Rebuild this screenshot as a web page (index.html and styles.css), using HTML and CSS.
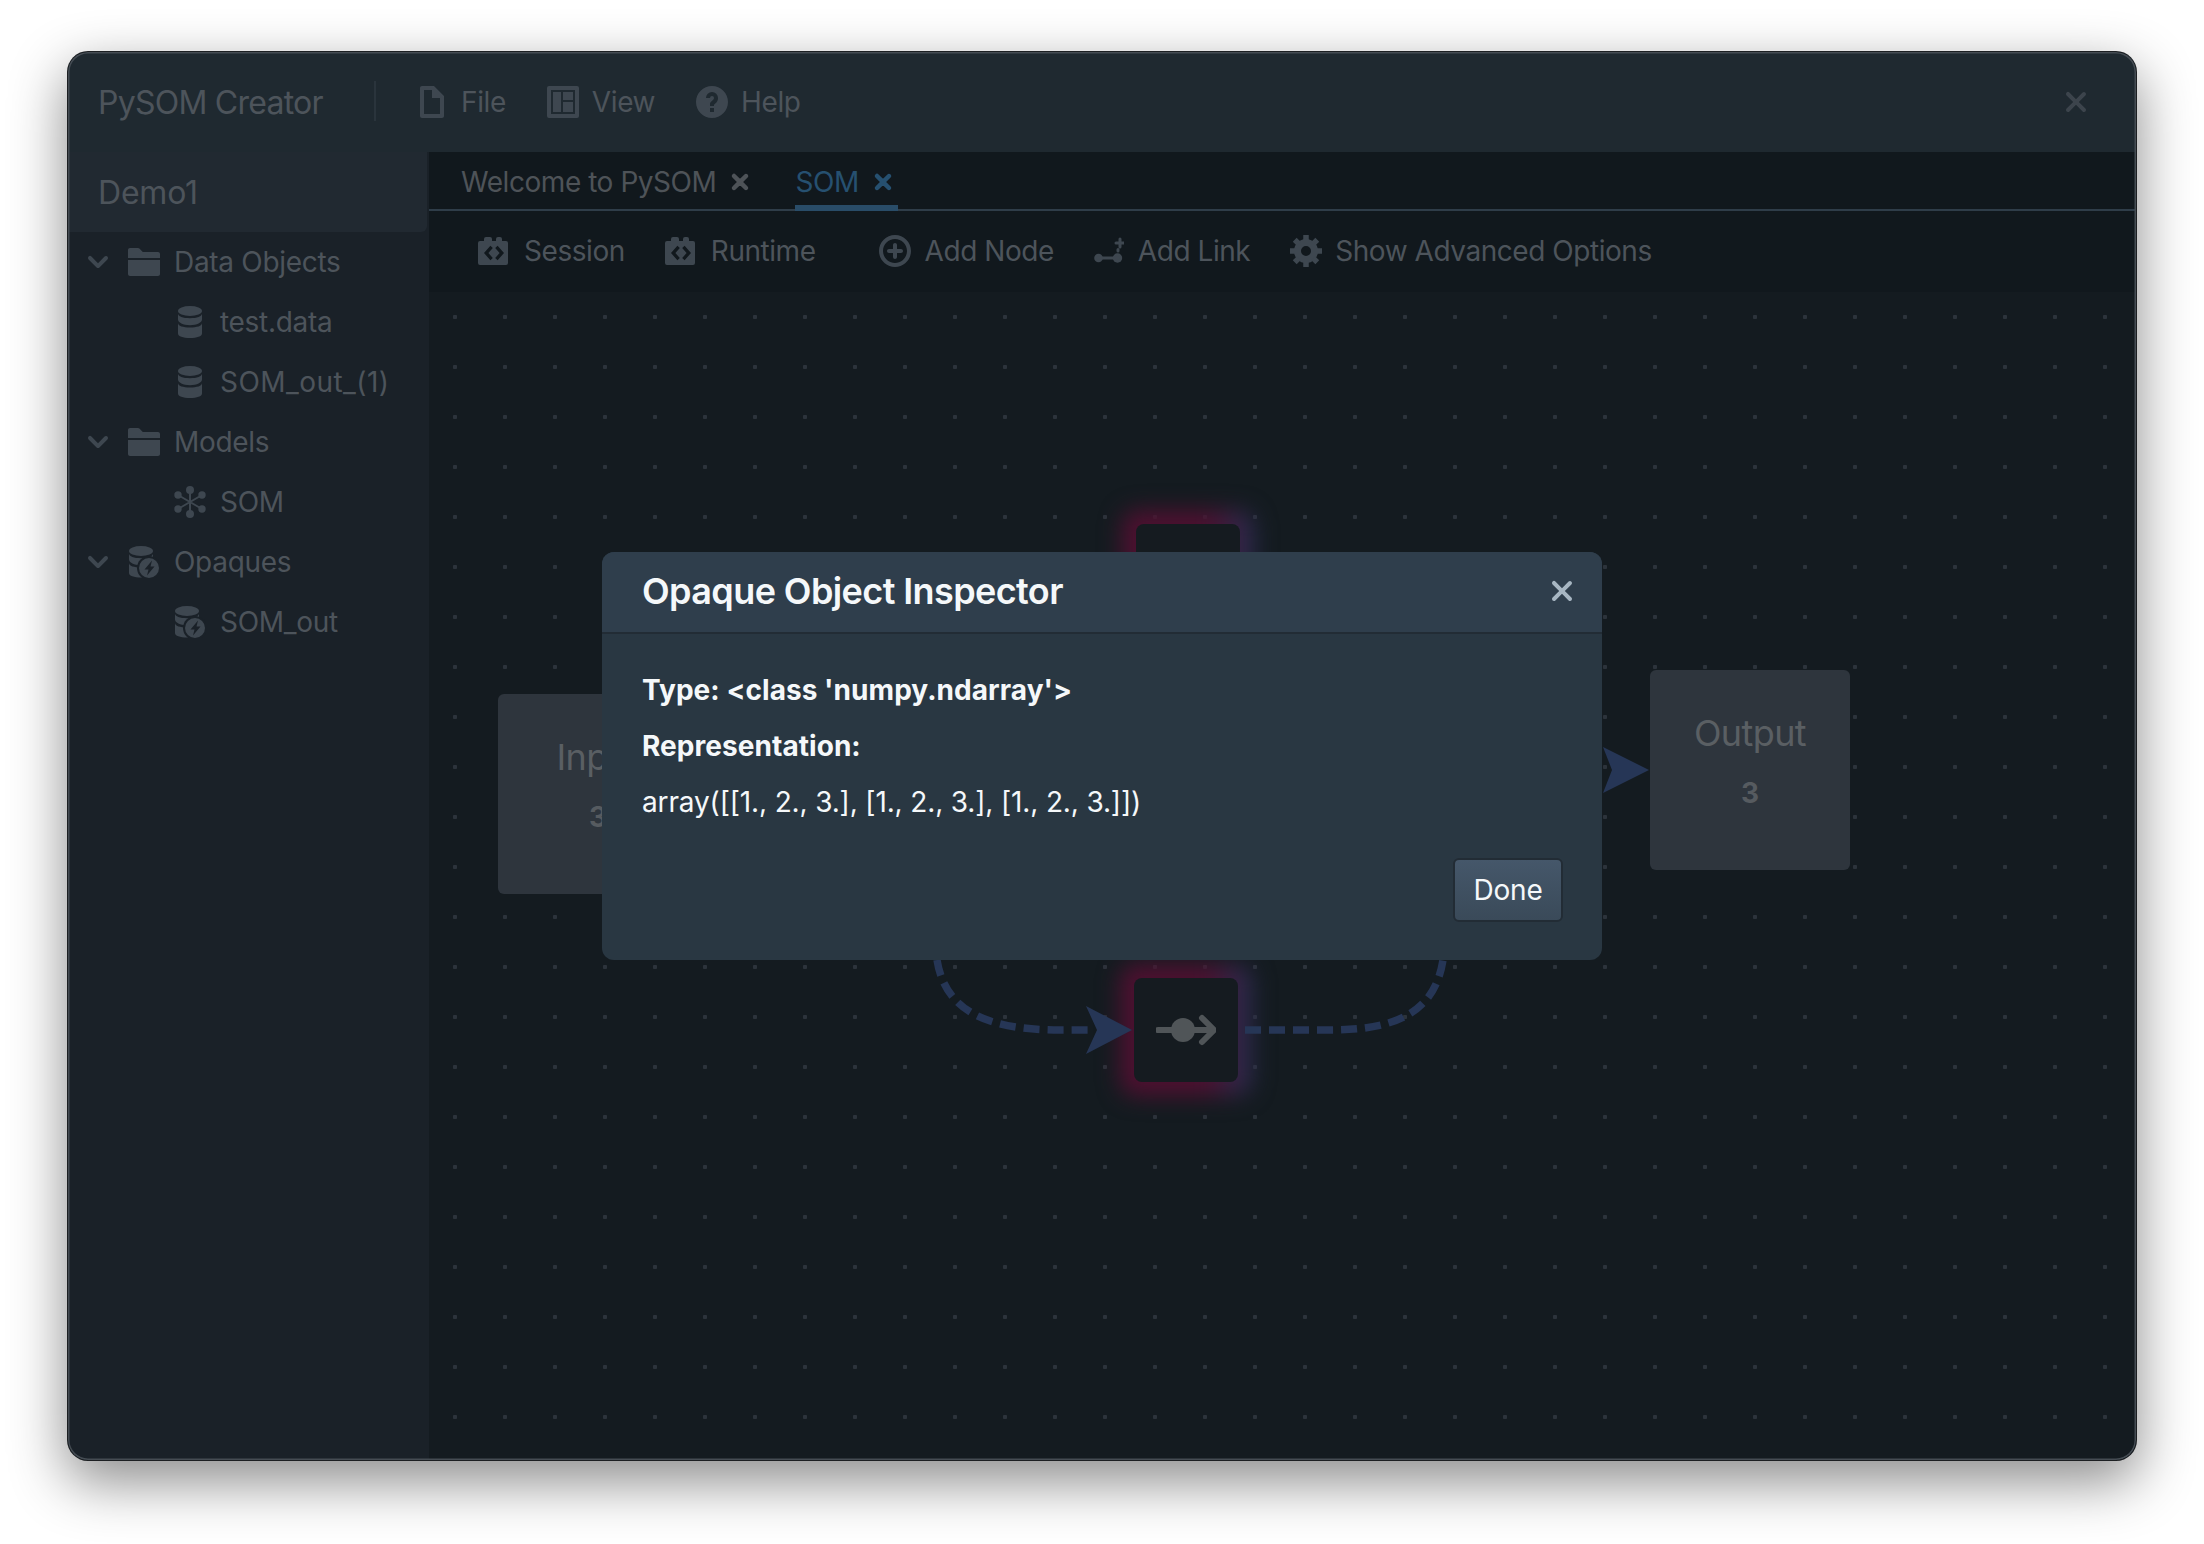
FILE: index.html
```html
<!DOCTYPE html>
<html lang="en">
<head>
    <meta charset="UTF-8">
    <title>PySOM Creator</title>
    <link rel="stylesheet" href="styles.css">
</head>
<body>
    <!-- icon sprite -->
    <svg class="sprite" xmlns="http://www.w3.org/2000/svg">
        <symbol id="i-cross" viewBox="0 0 16 16"><path d="M9.41 8l3.29-3.29c.19-.18.3-.43.3-.71a1.003 1.003 0 00-1.71-.71L8 6.59l-3.29-3.3a1.003 1.003 0 00-1.42 1.42L6.59 8 3.3 11.29c-.19.18-.3.43-.3.71a1.003 1.003 0 001.71.71L8 9.41l3.29 3.29c.18.19.43.3.71.3a1.003 1.003 0 00.71-1.71L9.41 8z"/></symbol>
        <symbol id="i-chevron" viewBox="0 0 16 16"><path d="M12 5c-.28 0-.53.11-.71.29L8 8.59l-3.29-3.3a1.003 1.003 0 00-1.42 1.42l4 4c.18.18.43.29.71.29s.53-.11.71-.29l4-4A1.003 1.003 0 0012 5z"/></symbol>
        <symbol id="i-document" viewBox="0 0 16 16"><path d="M9 0H3c-.55 0-1 .45-1 1v14c0 .55.45 1 1 1h10c.55 0 1-.45 1-1V5L9 0zm3 14H4V2h4v4h4v8z"/></symbol>
        <symbol id="i-control" viewBox="0 0 16 16"><path fill-rule="evenodd" d="M1 0h14a1 1 0 0 1 1 1v14a1 1 0 0 1-1 1H1a1 1 0 0 1-1-1V1a1 1 0 0 1 1-1zM2 2v12h12V2zM3 3h4v10H3zM8 3h5v4H8zM8 8h5v5H8z"/></symbol>
        <symbol id="i-help" viewBox="0 0 16 16"><path fill-rule="evenodd" d="M8 0C3.58 0 0 3.58 0 8s3.58 8 8 8 8-3.58 8-8-3.58-8-8-8zM7 11h2v2H7zM8 3a3 3 0 0 0-3 3h2a1 1 0 1 1 2 0c0 .3-.1.5-.3.7L7.3 8.1c-.2.2-.3.5-.3.9v1h2v-.6l1.2-1.2c.5-.5.8-1.2.8-2.2a3 3 0 0 0-3-3z"/></symbol>
        <symbol id="i-folder" viewBox="0 0 16 16"><path d="M0 14c0 .55.45 1 1 1h14c.55 0 1-.45 1-1V7H0v7zM15 3H7.41L5.7 1.29A.965.965 0 005 1H1c-.55 0-1 .45-1 1v4h16V4c0-.55-.45-1-1-1z"/></symbol>
        <symbol id="i-database" viewBox="0 0 24 32">
            <ellipse cx="12" cy="5" rx="12" ry="5"/>
            <path d="M0 7.500c0 3 5 4.700 12 4.700s12-1.700 12-4.700v6c0 3-5 5.700-12 5.700S0 16.500 0 13.500z"/>
            <path d="M0 17c0 3 5 4.500 12 4.500S24 20 24 17v10.500c0 2.800-5 4.500-12 4.500S0 30.300 0 27.500z"/>
        </symbol>
        <symbol id="i-graph" viewBox="0 0 32 32">
            <path d="M16 4v24M4 9l24 14M28 9L4 23" stroke="currentColor" stroke-width="2"/>
            <circle cx="16" cy="4" r="4"/><circle cx="16" cy="28" r="4"/>
            <circle cx="4" cy="9" r="3.700"/><circle cx="28" cy="9" r="3.700"/>
            <circle cx="4" cy="23" r="3.700"/><circle cx="28" cy="23" r="3.700"/>
        </symbol>
        <symbol id="i-opaque" viewBox="0 0 30 32">
            <ellipse cx="12" cy="5" rx="12" ry="5"/>
            <path d="M0 7.500c0 3 5 4.700 12 4.700s12-1.700 12-4.700v6c0 3-5 5.700-12 5.700S0 16.500 0 13.500z"/>
            <path d="M0 17c0 3 5 4.500 12 4.500S24 20 24 17v10c0 2.800-5 4.500-12 4.500S0 29.800 0 27z"/>
            <circle cx="20" cy="22" r="12" fill="#1a2128"/>
            <circle cx="20" cy="22" r="10"/>
            <path d="M23 14.500l-7.500 9h4L18 29.500l7.500-9h-4z" fill="#1a2128"/>
        </symbol>
        <symbol id="i-code" viewBox="0 0 16 16"><path fill-rule="evenodd" d="M1 3h2V2a1 1 0 0 1 1-1h2a1 1 0 0 1 1 1v1h2V2a1 1 0 0 1 1-1h1a1 1 0 0 1 1 1v1h2a1 1 0 0 1 1 1v10a1 1 0 0 1-1 1H1a1 1 0 0 1-1-1V4a1 1 0 0 1 1-1zM6.200 5.400L3 9l3.200 3.600 1.200-1.100L5.200 9l2.200-2.500zM9.800 5.400L8.600 6.500 10.800 9l-2.200 2.500 1.200 1.100L13 9z"/></symbol>
        <symbol id="i-add" viewBox="0 0 16 16"><path d="M11 7H9V5c0-.55-.45-1-1-1s-1 .45-1 1v2H5c-.55 0-1 .45-1 1s.45 1 1 1h2v2c0 .55.45 1 1 1s1-.45 1-1V9h2c.55 0 1-.45 1-1s-.45-1-1-1zM8 0C3.580 0 0 3.580 0 8s3.580 8 8 8 8-3.580 8-8-3.580-8-8-8zm0 14c-3.310 0-6-2.690-6-6s2.690-6 6-6 6 2.690 6 6-2.690 6-6 6z"/></symbol>
        <symbol id="i-link" viewBox="0 0 30 28">
            <circle cx="4.500" cy="21" r="4.300"/><circle cx="23.500" cy="21" r="4.700"/>
            <path d="M4 21h20M24 12.500v1.500M26 2v8M22 6h8" stroke="currentColor" stroke-width="3" stroke-linecap="round"/>
        </symbol>
        <symbol id="i-gear" viewBox="0 0 32 32">
            <circle cx="16" cy="16" r="8.500" fill="none" stroke="currentColor" stroke-width="7"/>
            <path d="M16 0v6M16 26v6M0 16h6M26 16h6M4.700 4.700l4.200 4.200M23.100 23.100l4.200 4.200M27.300 4.700l-4.200 4.200M8.900 23.100l-4.200 4.200" stroke="currentColor" stroke-width="5.500"/>
        </symbol>
        <symbol id="i-merge" viewBox="0 0 60 32">
            <circle cx="27" cy="16" r="12"/>
            <path d="M2 16h55M46 4l12 12-12 12" fill="none" stroke="currentColor" stroke-width="6" stroke-linecap="round" stroke-linejoin="round"/>
        </symbol>
    </svg>

    <div class="window">
        <header class="titlebar">
            <div class="app-name">PySOM Creator</div>
            <div class="divider"></div>
            <nav class="menu">
                <a class="menu-item"><svg class="icon"><use href="#i-document"/></svg>File</a>
                <a class="menu-item"><svg class="icon"><use href="#i-control"/></svg>View</a>
                <a class="menu-item"><svg class="icon"><use href="#i-help"/></svg>Help</a>
            </nav>
            <svg class="window-close"><use href="#i-cross"/></svg>
        </header>

        <div class="main">
            <aside class="sidebar">
                <div class="project">Demo1</div>
                <ul class="tree">
                    <li class="tree-row"><svg class="chevron"><use href="#i-chevron"/></svg><svg class="folder"><use href="#i-folder"/></svg>Data Objects</li>
                    <li class="tree-row child"><svg class="leaf"><use href="#i-database"/></svg>test.data</li>
                    <li class="tree-row child loose"><svg class="leaf"><use href="#i-database"/></svg>SOM_out_(1)</li>
                    <li class="tree-row"><svg class="chevron"><use href="#i-chevron"/></svg><svg class="folder"><use href="#i-folder"/></svg>Models</li>
                    <li class="tree-row child"><svg class="leaf wide"><use href="#i-graph"/></svg>SOM</li>
                    <li class="tree-row"><svg class="chevron"><use href="#i-chevron"/></svg><svg class="folder"><use href="#i-opaque"/></svg>Opaques</li>
                    <li class="tree-row child"><svg class="leaf wide"><use href="#i-opaque"/></svg>SOM_out</li>
                </ul>
            </aside>

            <section class="content">
                <div class="tabs">
                    <div class="tab">Welcome to PySOM<svg class="tab-close"><use href="#i-cross"/></svg></div>
                    <div class="tab active">SOM<svg class="tab-close"><use href="#i-cross"/></svg></div>
                </div>

                <div class="toolbar">
                    <a class="tool"><svg class="icon"><use href="#i-code"/></svg>Session</a>
                    <a class="tool"><svg class="icon"><use href="#i-code"/></svg>Runtime</a>
                    <a class="tool group-start"><svg class="icon"><use href="#i-add"/></svg>Add Node</a>
                    <a class="tool"><svg class="icon icon-link"><use href="#i-link"/></svg>Add Link</a>
                    <a class="tool tight"><svg class="icon"><use href="#i-gear"/></svg>Show Advanced Options</a>
                </div>

                <div class="canvas">
                    <!-- edges, viewBox is in page coordinates -->
                    <svg class="edges" viewBox="429 292 1707 1168">
                        <path class="edge" d="M937 960C945 1010 985 1030 1060 1030L1090 1030"/>
                        <path class="edge" d="M1245 1030L1330 1030C1400 1030 1435 1010 1443 960"/>
                        <path class="head" d="M1132 1030L1086 1006L1097 1030L1086 1054z"/>
                        <path class="head" d="M1649 770L1603 747L1612 770L1603 793z"/>
                    </svg>

                    <div class="node box input-node">
                        <div class="node-name">Input</div>
                        <div class="node-size">3</div>
                    </div>
                    <div class="node box output-node">
                        <div class="node-name">Output</div>
                        <div class="node-size">3</div>
                    </div>
                    <div class="node op top-op"></div>
                    <div class="node op bottom-op"><svg class="op-icon"><use href="#i-merge"/></svg></div>
                </div>
            </section>
        </div>

        <div class="dialog">
            <div class="dialog-header">
                <h2>Opaque Object Inspector</h2>
                <svg class="dialog-close"><use href="#i-cross"/></svg>
            </div>
            <div class="dialog-body">
                <p class="strong">Type: &lt;class 'numpy.ndarray'&gt;</p>
                <p class="strong">Representation:</p>
                <p>array([[1., 2., 3.], [1., 2., 3.], [1., 2., 3.]])</p>
            </div>
            <div class="dialog-footer">
                <button class="btn">Done</button>
            </div>
        </div>
    </div>
</body>
</html>
```

FILE: styles.css
```css
/* --- Page --- */
body {
    margin: 0;
    height: 1544px;
    overflow: hidden;
    background-color: #ffffff;
    font-family: "Inter", "Liberation Sans", sans-serif;
    font-size: 28px;
    letter-spacing: -0.3px;
    color: #4d545b;
}

.sprite {
    position: absolute;
    width: 0;
    height: 0;
}

svg {
    fill: currentColor;
    flex: none;
}

/* --- Window frame --- */
.window {
    position: relative;
    top: 52px;
    left: 68px;
    display: flex;
    flex-direction: column;
    width: 2068px;
    height: 1408px;
    border-radius: 20px;
    overflow: hidden;
    background-color: #1a2128;
    box-shadow: 0 0 0 1px #1c1f22, 0 20px 55px 2px rgba(0, 0, 0, 0.45);
}

.window::after {
    content: "";
    position: absolute;
    inset: 0;
    border-radius: 20px;
    box-shadow: inset 0 0 0 1.5px #454c53;
    pointer-events: none;
}

/* --- Title bar --- */
.titlebar {
    display: flex;
    align-items: center;
    height: 100px;
    flex: none;
    padding-left: 30px;
    background-color: #1f2930;
}

.app-name {
    font-size: 32px;
    letter-spacing: -0.75px;
    width: 276px;
}

.divider {
    width: 2px;
    height: 40px;
    background-color: #2a343c;
    margin-top: -2px;
}

.menu {
    display: flex;
    gap: 41px;
    margin-left: 40px;
    margin-top: -1px;
    letter-spacing: -0.4px;
}

.menu-item {
    display: flex;
    align-items: center;
    gap: 13px;
}

.icon {
    width: 32px;
    height: 32px;
    color: #3e4750;
}

.icon-link {
    width: 30px;
    height: 28px;
}

.window-close {
    width: 32px;
    height: 32px;
    margin-left: auto;
    margin-right: 44px;
    color: #3c444c;
}

/* --- Sidebar --- */
.main {
    display: flex;
    flex: 1;
    min-height: 0;
}

.sidebar {
    width: 361px;
    flex: none;
    background-color: #1a2128;
}

.project {
    height: 80px;
    line-height: 82px;
    padding-left: 30px;
    font-size: 32px;
    letter-spacing: -0.2px;
    background-color: #212931;
    border-radius: 0 0 6px 0;
    margin-right: 2px;
}

.tree {
    list-style: none;
    margin: 0;
    padding: 0;
}

.tree-row {
    display: flex;
    align-items: center;
    height: 60px;
    padding-left: 14px;
}

.tree-row.child {
    padding-left: 110px;
}

.tree-row.loose {
    letter-spacing: 0.45px;
}

.chevron {
    width: 32px;
    height: 32px;
    color: #3e4750;
    margin-right: 14px;
}

.folder {
    width: 32px;
    height: 32px;
    color: #3e4750;
    margin-right: 14px;
}

.leaf {
    width: 24px;
    height: 32px;
    color: #3e4750;
    margin-right: 18px;
}

.leaf.wide {
    width: 32px;
    margin-left: -4px;
    margin-right: 14px;
}

/* --- Tabs --- */
.content {
    display: flex;
    flex-direction: column;
    flex: 1;
    min-width: 0;
    background-color: #11181d;
}

.tabs {
    display: flex;
    gap: 43px;
    height: 59px;
    flex: none;
    box-sizing: border-box;
    padding-left: 32px;
    border-bottom: 2px solid #2f3d49;
    letter-spacing: -0.45px;
}

.tab {
    display: flex;
    align-items: center;
    gap: 12px;
    height: 59px;
    box-sizing: border-box;
    color: #4e5358;
}

.tab.active {
    color: #265070;
    border-bottom: 6px solid #294c68;
    padding-top: 6px;
    padding-right: 3px;
}

.tab-close {
    width: 24px;
    height: 24px;
    stroke: currentColor;
    stroke-width: 1;
}

/* --- Toolbar --- */
.toolbar {
    display: flex;
    align-items: center;
    gap: 40px;
    height: 81px;
    flex: none;
    padding: 0 0 2px 49px;
    box-sizing: border-box;
    letter-spacing: -0.45px;
}

.tool {
    display: flex;
    align-items: center;
    gap: 14px;
}

.group-start {
    margin-left: 23px;
}

.tool.tight {
    gap: 13px;
}

/* --- Canvas --- */
.canvas {
    position: relative;
    flex: 1;
    isolation: isolate;
    background-color: #141b20;
    background-image: radial-gradient(circle at center, #2c333b 2px, transparent 2.5px);
    background-size: 50px 50px;
    background-position: 1px 0;
}

.edges {
    position: absolute;
    inset: 0;
    width: 100%;
    height: 100%;
}

.edge {
    fill: none;
    stroke: #263656;
    stroke-width: 7.5;
    stroke-dasharray: 16 8;
}

.head {
    fill: #263656;
}

.node {
    position: absolute;
    border-radius: 6px;
}

.box {
    width: 200px;
    height: 200px;
    box-sizing: border-box;
    padding-top: 40px;
    text-align: center;
    background-color: #2e353d;
    color: #5a5f63;
}

.node-name {
    font-size: 36px;
    letter-spacing: -0.6px;
    line-height: 46px;
}

.node-size {
    font-size: 28px;
    font-weight: 700;
    line-height: 40px;
    margin-top: 17px;
    color: #565b60;
}

.input-node {
    left: 69px;
    top: 402px;
}

.output-node {
    left: 1221px;
    top: 378px;
}

.op {
    display: flex;
    align-items: center;
    justify-content: center;
    width: 104px;
    height: 104px;
    background-color: #151b20;
    border-radius: 8px;
}

/* glow behind the operation nodes */
.op::before {
    content: "";
    position: absolute;
    inset: -14px;
    z-index: -1;
    border-radius: 16px;
    background: linear-gradient(90deg, #4e1030 0%, #4e1030 65%, #272e52 100%);
    filter: blur(11px);
}

.top-op {
    left: 707px;
    top: 232px;
}

.bottom-op {
    left: 705px;
    top: 686px;
}

.op-icon {
    width: 60px;
    height: 32px;
    color: #505558;
}

/* --- Dialog --- */
.dialog {
    position: absolute;
    left: 534px;
    top: 500px;
    display: flex;
    flex-direction: column;
    width: 1000px;
    height: 408px;
    border-radius: 12px;
    overflow: hidden;
    background-color: #293742;
    color: #f5f8fa;
}

.dialog-header {
    display: flex;
    align-items: center;
    justify-content: space-between;
    height: 82px;
    box-sizing: border-box;
    padding: 0 24px 2px 40px;
    background-color: #2f3e4c;
    border-bottom: 2px solid #222c35;
}

.dialog-header h2 {
    margin: 0;
    font-size: 36px;
    font-weight: 600;
    letter-spacing: -0.6px;
}

.dialog-close {
    width: 32px;
    height: 32px;
    color: #a7b6c2;
}

.dialog-body {
    flex: 1;
    padding: 36px 40px 0;
}

.dialog-body p {
    margin: 0 0 16px;
    line-height: 40px;
    letter-spacing: -0.14px;
}

.dialog-body .strong {
    font-weight: 700;
    letter-spacing: 0.05px;
}

.dialog-footer {
    display: flex;
    justify-content: flex-end;
    padding: 0 39px 38px 0;
}

.btn {
    width: 110px;
    height: 64px;
    padding: 0;
    font-family: inherit;
    font-size: 28px;
    letter-spacing: -0.2px;
    color: #f5f8fa;
    background: linear-gradient(180deg, #45576a, #3a4a59);
    border: 2px solid #222c35;
    border-radius: 6px;
}
```
